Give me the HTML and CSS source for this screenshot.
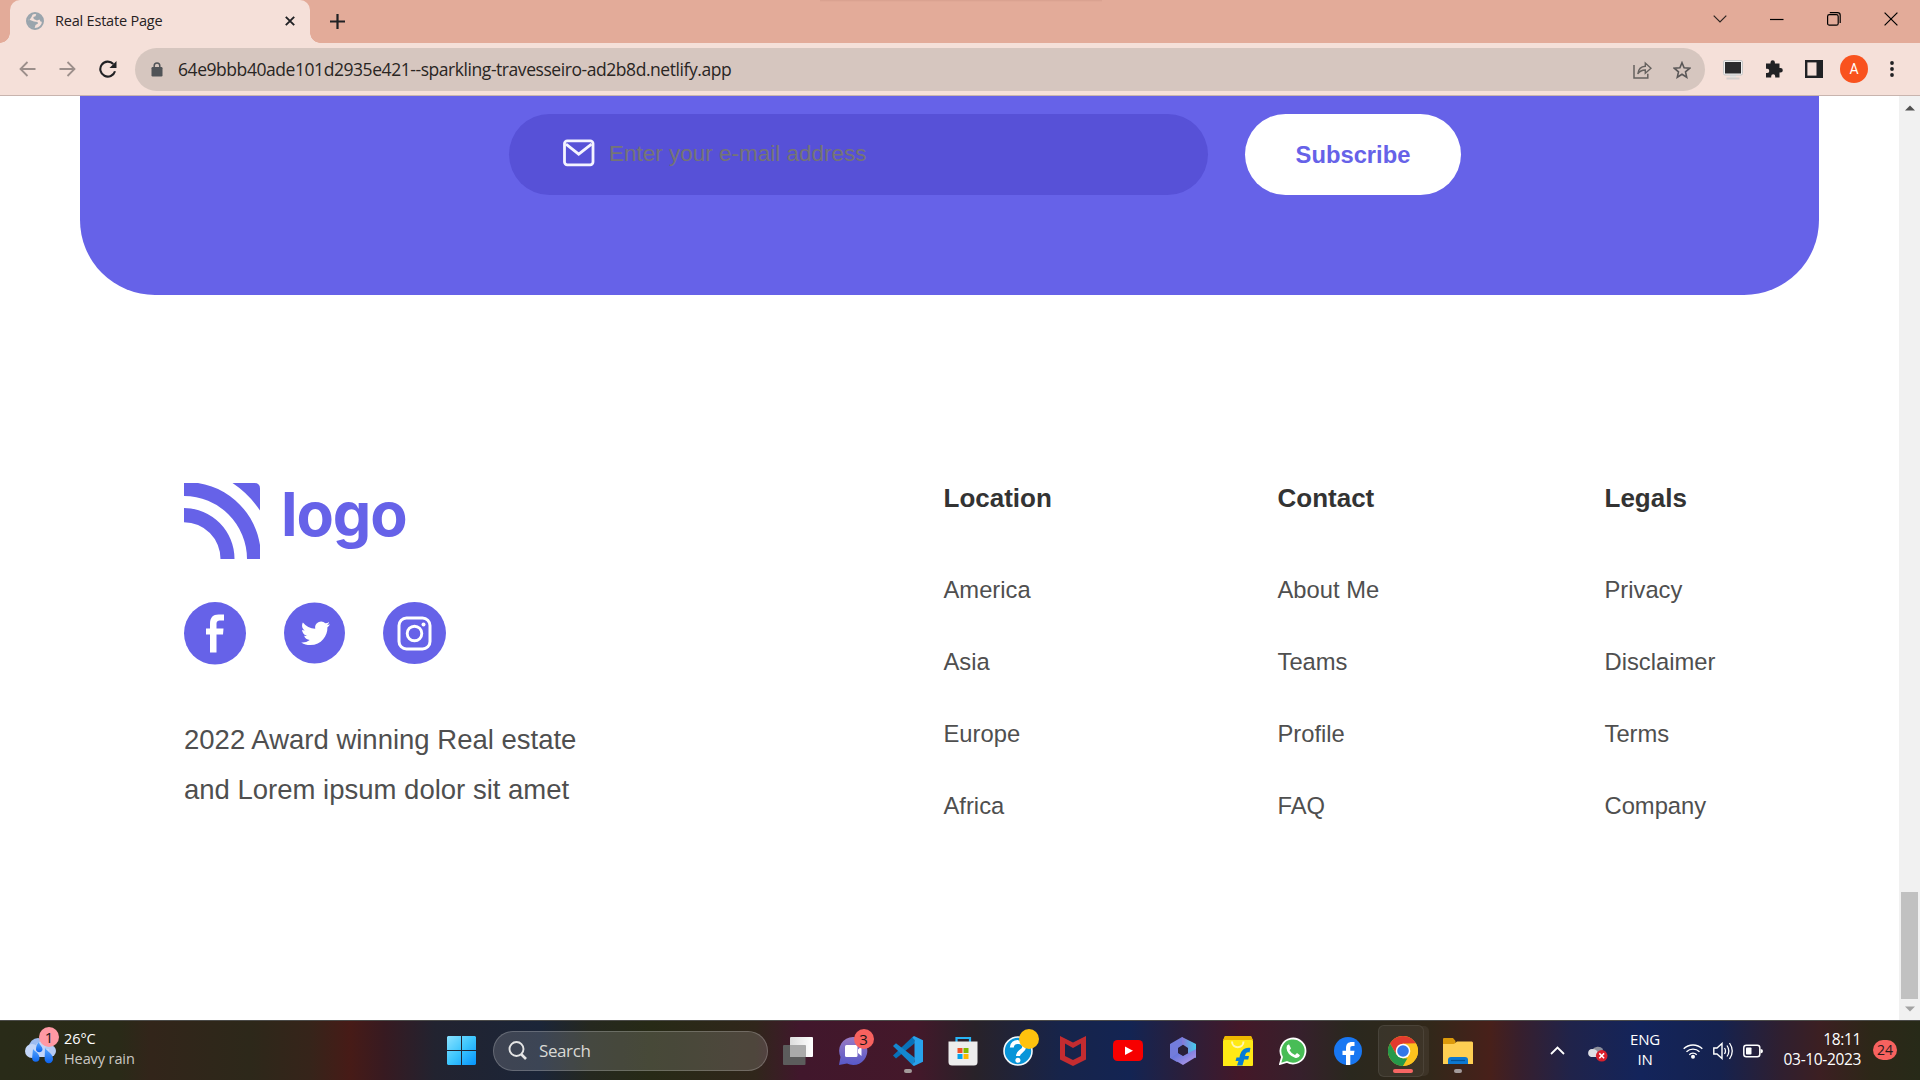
FILE: index.html
```html
<!DOCTYPE html>
<html lang="en">
<head>
<meta charset="utf-8">
<title>Real Estate Page</title>
<link rel="stylesheet" href="styles.css">
</head>
<body>
<div class="screen">
  <header class="tabstrip">
    <div class="tab">
      <svg class="globe" width="18" height="18" viewBox="0 0 18 18"><circle cx="9" cy="9" r="8" fill="#f5e0d9" stroke="#9aa5ad" stroke-width="2"/><path d="M10.500 1.500L9.500 4.200 7.300 5 7.800 7 11 8.500 13.500 7.600 14.500 9.500 16.500 10 17 7 15 3.500ZM1.500 8.200L4 8 8 9.500 11.500 10 12 11.500 9.500 13 8.500 16.500 5 15.500 2 12ZM1.500 7.500 4 3 7 1.500 5.500 5 3.500 8Z" fill="#9aa5ad"/></svg>
      <span class="tab-title">Real Estate Page</span>
      <svg class="tab-close" width="10" height="10" viewBox="0 0 10 10"><path d="M.8.800 9.200 9.200M9.200.8.800 9.200" stroke="#202124" stroke-width="1.900"/></svg>
    </div>
    <svg class="newtab" width="15" height="15" viewBox="0 0 15 15"><path d="M7.500 0V15M0 7.500H15" stroke="#202124" stroke-width="2.200"/></svg>
    <div class="wincontrols">
      <svg width="14" height="8" viewBox="0 0 14 8"><path d="M.7.700 7 7 13.300.7" fill="none" stroke="#2c2421" stroke-width="1.200"/></svg>
      <svg width="14" height="14" viewBox="0 0 14 14"><path d="M0 7.500H13.500" stroke="#000" stroke-width="1.200"/></svg>
      <svg width="14" height="14" viewBox="0 0 14 14"><rect x=".6" y="2.600" width="10.600" height="10.600" rx="1.800" fill="none" stroke="#000" stroke-width="1.200"/><path d="M2.800.600H10.500Q13.200.600 13.200 3.300V11" fill="none" stroke="#000" stroke-width="1.200"/></svg>
      <svg width="14" height="14" viewBox="0 0 14 14"><path d="M.6.600 13.400 13.400M13.400.6.600 13.400" stroke="#000" stroke-width="1.200"/></svg>
    </div>
  </header>
  <div class="toolbar">
    <div class="nav">
      <svg width="17" height="16" viewBox="0 0 17 16"><path d="M16.500 8H1.500M8.500 1 1.500 8 8.500 15" fill="none" stroke="#9c8f8b" stroke-width="1.800"/></svg>
      <svg width="17" height="16" viewBox="0 0 17 16"><path d="M.5 8H15.500M8.500 1 15.500 8 8.500 15" fill="none" stroke="#9c8f8b" stroke-width="1.800"/></svg>
      <svg width="18" height="18" viewBox="0 0 18 18"><path d="M14.300 4A7.500 7.500 0 1 0 16 11.200" fill="none" stroke="#202124" stroke-width="2.100"/><path d="M17.500 1V8H10.500Z" fill="#202124"/></svg>
    </div>
    <div class="omnibox">
      <svg width="12" height="15" viewBox="0 0 12 15"><rect x=".5" y="5" width="11" height="9.500" rx="1.200" fill="#505357"/><path d="M3.200 6V3.700a2.800 2.800 0 0 1 5.600 0V6" fill="none" stroke="#505357" stroke-width="1.500"/></svg>
      <span class="url">64e9bbb40ade101d2935e421--sparkling-travesseiro-ad2b8d.netlify.app</span>
      <svg class="share" width="19" height="18" viewBox="0 0 19 18"><path d="M1 4V17H14.800V12.800" fill="none" stroke="#66625f" stroke-width="1.500"/><path d="M4.800 13C5.300 8.600 8 5.600 12.300 5.300V2L18 7.300 12.300 12.300V9C9 9 6.500 10.300 4.800 13Z" fill="none" stroke="#66625f" stroke-width="1.400"/></svg>
      <svg width="18" height="18" viewBox="0 0 18 18"><path d="M9 1.700 11.100 6.700 16.700 7.200 12.500 10.800 13.700 16.200 9 13.300 4.300 16.200 5.500 10.800 1.300 7.200 6.900 6.700Z" fill="none" stroke="#5a5757" stroke-width="1.600"/></svg>
    </div>
    <div class="extensions">
      <svg width="20" height="20" viewBox="0 0 20 20"><path d="M7 15h6v2.500H7z" fill="#e2e2e2"/><path d="M3.500 17.500h13v2h-13z" fill="#d2cfcd"/><rect x=".5" y=".5" width="19" height="14.500" rx="1.500" fill="#f0f0f0" stroke="#c6c6c6"/><rect x="2" y="2" width="16" height="11.500" fill="#2b2b2d"/></svg>
      <svg width="18" height="18" viewBox="0 0 18 18"><path d="M1 3.500H5.500V2.500a2.200 2.200 0 0 1 4.400 0V3.500H14.500V8H15.500a2.300 2.300 0 0 1 0 4.600H14.500V17.500H10.200V16.200a2 2 0 0 0-4 0V17.500H1V13H2.200a2.100 2.100 0 0 0 0-4.200H1Z" fill="#202124"/></svg>
      <svg width="18" height="18" viewBox="0 0 18 18"><rect x="1.200" y="1.200" width="15.600" height="15.600" fill="none" stroke="#202124" stroke-width="2.400"/><path d="M11.500 1H17V17H11.500Z" fill="#202124"/></svg>
      <span class="avatar">A</span>
      <svg class="kebab" width="4" height="16" viewBox="0 0 4 16"><circle cx="2" cy="2" r="1.900" fill="#202124"/><circle cx="2" cy="8" r="1.900" fill="#202124"/><circle cx="2" cy="14" r="1.900" fill="#202124"/></svg>
    </div>
  </div>

  <div class="viewport">
    <main class="page">
      <section class="newsletter">
        <div class="email">
          <svg width="32" height="28" viewBox="0 0 32 28"><rect x="1.500" y="1.800" width="28.500" height="24" rx="2.800" fill="none" stroke="#f4f3ff" stroke-width="2.800"/><path d="M3 5.200 15.700 15.200 28.500 5.200" fill="none" stroke="#f4f3ff" stroke-width="2.800"/></svg>
          <span>Enter your e-mail address</span>
        </div>
        <div class="subscribe">Subscribe</div>
      </section>
      <footer class="footer">
        <div class="brand">
          <div class="logo">
            <svg width="76" height="76" viewBox="0 0 76 76" fill="#6662e8"><path d="M0 25A51 51 0 0 1 50.500 76H36.500A36.500 36.500 0 0 0 0 39.300Z"/><path d="M0 0H14C46 5 71 30 76 62V76H63A63 63 0 0 0 0 13Z"/><path d="M48.500 0H70.500Q76 0 76 5.500V27.500Q65 11 48.500 0Z"/></svg>
            <span class="wordmark">logo</span>
          </div>
          <div class="social">
            <svg width="62" height="63" viewBox="0 0 62 63"><ellipse cx="31" cy="31.300" rx="31" ry="31.300" fill="#6662e8"/><path d="M26 50.500V32.500H22V26.500H26V22C26 15.500 29 12.500 34.500 12.500H40V18.500H36.500C33.300 18.500 32.500 19.500 32.500 22.500V26.500H39.500L39 32.500H32.500V50.500Z" fill="#fff"/></svg>
            <svg width="61" height="62" viewBox="0 0 61 62"><circle cx="30.500" cy="31" r="30.500" fill="#6662e8"/><path transform="translate(17.200 18.200) scale(1.220)" d="M23.600 3.300c-.9.400-1.800.6-2.800.8 1-.6 1.800-1.500 2.100-2.700-.9.600-2 1-3.100 1.200A4.900 4.900 0 0 0 11.500 7C7.400 6.800 3.800 4.900 1.400 1.900.1 4.100.7 7 2.900 8.400c-.8 0-1.600-.2-2.200-.6 0 2.300 1.600 4.400 3.900 4.900-.7.200-1.500.2-2.200.1.600 2 2.400 3.400 4.600 3.400C4.900 17.800 2.400 18.500 0 18.200c2.200 1.400 4.700 2.200 7.500 2.200 9.100 0 14.300-7.700 14-14.600.8-.7 1.600-1.500 2.100-2.500z" fill="#fff"/></svg>
            <svg width="63" height="62" viewBox="0 0 63 62"><ellipse cx="31.500" cy="31" rx="31.500" ry="31" fill="#6662e8"/><rect x="16" y="16" width="31" height="31" rx="7.500" fill="none" stroke="#fff" stroke-width="3"/><circle cx="31.500" cy="31.500" r="7.300" fill="none" stroke="#fff" stroke-width="2.900"/><circle cx="40.500" cy="22.500" r="2" fill="#fff"/></svg>
          </div>
          <p class="blurb">2022 Award winning Real estate<br>and Lorem ipsum dolor sit amet</p>
        </div>
        <div class="links"><h4>Location</h4><a>America</a><a>Asia</a><a>Europe</a><a>Africa</a></div>
        <div class="links"><h4>Contact</h4><a>About Me</a><a>Teams</a><a>Profile</a><a>FAQ</a></div>
        <div class="links"><h4>Legals</h4><a>Privacy</a><a>Disclaimer</a><a>Terms</a><a>Company</a></div>
      </footer>
    </main>
    <aside class="scrollbar">
      <svg width="10" height="6" viewBox="0 0 10 6"><path d="M0 5.500 5 .5 10 5.500Z" fill="#505050"/></svg>
      <div class="thumb"></div>
      <svg width="10" height="6" viewBox="0 0 10 6"><path d="M0 .5 5 5.500 10 .5Z" fill="#a3a3a3"/></svg>
    </aside>
  </div>

  <div class="taskbar">
    <div class="weather">
      <div class="weather-icon">
        <svg width="34" height="32" viewBox="0 0 34 32"><defs><linearGradient id="rain" x2="0" y2="1"><stop offset="0" stop-color="#58a7ff"/><stop offset="1" stop-color="#0a62ee"/></linearGradient></defs><circle cx="13" cy="12" r="9" fill="#9dbcf0"/><circle cx="7" cy="16" r="7" fill="#c3d6f8"/><circle cx="18" cy="14" r="8" fill="#c3d6f8"/><circle cx="25" cy="16" r="6" fill="#b5cbf5"/><path d="M7 14h17v8H7z" fill="#c3d6f8"/><path d="M14 7c0 3 3.500 4 3.500 7.500a3.300 3.300 0 0 1-6.500 0C11 11 12 9 14 7Z" fill="url(#rain)"/><path d="M8 14C10 17 14.500 18 14.500 23a3.700 3.700 0 0 1-7.400 0ZM20 13c2 3 8 6 8 11a4.200 4.200 0 0 1-8.400 0Z" fill="url(#rain)"/></svg>
        <span class="badge pink">1</span>
      </div>
      <div class="weather-text"><b>26°C</b><span>Heavy rain</span></div>
    </div>
    <svg class="start" width="29" height="29" viewBox="0 0 29 29"><defs><linearGradient id="win" x2="1" y2="1"><stop offset="0" stop-color="#8be2ff"/><stop offset=".5" stop-color="#3cc5fd"/><stop offset="1" stop-color="#0593fb"/></linearGradient></defs><path d="M1 0H14V14H0V1ZM15 0H28L29 1V14H15ZM0 15H14V29H1L0 28ZM15 15H29V28L28 29H15Z" fill="url(#win)"/></svg>
    <div class="search">
      <svg width="20" height="20" viewBox="0 0 20 20"><circle cx="8.500" cy="8" r="7" fill="none" stroke="#e5e5e5" stroke-width="1.900"/><path d="M13 13 18 18" stroke="#e5e5e5" stroke-width="2.600"/></svg>
      <span>Search</span>
    </div>
    <div class="apps">
      <div class="app"><svg width="30" height="30" viewBox="0 0 30 30"><defs><linearGradient id="tv"><stop offset="0" stop-color="#ddd"/><stop offset="1" stop-color="#fff"/></linearGradient></defs><rect x="7" y="1" width="23" height="20" rx="1" fill="url(#tv)"/><rect x="0" y="9" width="22.500" height="20" rx="1" fill="#5c5c5c"/><path d="M7 9H22.500V21H7Z" fill="#aaa"/></svg></div>
      <div class="app"><svg width="30" height="30" viewBox="0 0 30 30"><defs><linearGradient id="chat" x2="0" y2="1"><stop offset="0" stop-color="#9a7bc4"/><stop offset="1" stop-color="#5758c8"/></linearGradient></defs><path d="M15 1a14 14 0 1 1-6 26.500L1 29 2.500 21A14 14 0 0 1 15 1Z" fill="url(#chat)"/><rect x="7" y="9" width="12.500" height="12" rx="1.500" fill="#fff"/><path d="M20 13.500 23.500 10.500V20L20 17Z" fill="#fff"/></svg><span class="badge red app-badge">3</span></div>
      <div class="app"><svg width="30" height="30" viewBox="0 0 30 30"><path d="M0 19.500 3 22.500 22 7 20.500 0Z" fill="#0871b9"/><path d="M0 10 3 7.200 22 22 20.500 30Z" fill="#1487cf"/><path d="M21 0 30 4.200V25.800L21 30 19.500 28.500 21.500 26V4L19.500 1.500Z" fill="#28a2ec"/></svg><i class="dot"></i></div>
      <div class="app"><svg width="30" height="30" viewBox="0 0 30 30"><path d="M8.500 7V2H22V7" fill="none" stroke="#28b4f5" stroke-width="2.200"/><path d="M.5 5.500H29.500V26Q29.500 29.500 26 29.500H4Q.5 29.500.5 26Z" fill="#ededed"/><path d="M9.500 12H14.500V17H9.500Z" fill="#ef5128"/><path d="M15.500 12H20.500V17H15.500Z" fill="#80b900"/><path d="M9.500 18H14.500V23H9.500Z" fill="#03a3ec"/><path d="M15.500 18H20.500V23H15.500Z" fill="#fdb802"/></svg></div>
      <div class="app"><svg width="30" height="30" viewBox="0 0 30 30"><circle cx="15" cy="15" r="14" fill="#0795d9" stroke="#f4f8fb" stroke-width="1.600"/><path d="M8.800 11.500C9 7.600 11.500 5.800 15.200 6 19 6 21.300 8 21.200 11 21 15 15.200 15.400 15 20" fill="none" stroke="#fff" stroke-width="4"/><circle cx="14.900" cy="24.300" r="2.500" fill="#fff"/></svg><span class="badge gold app-badge"></span></div>
      <div class="app"><svg width="30" height="30" viewBox="0 0 30 30"><path d="M2 0 15 6.500 28 0V23.500L15 30 2 23.500ZM7 7.500V20L15 24 23 20V7.500L15 12Z" fill="#c42c30" fill-rule="evenodd"/></svg></div>
      <div class="app"><svg width="30" height="30" viewBox="0 0 30 30"><rect y="4" width="30" height="21" rx="4.500" fill="#f70000"/><path d="M12 10.500 20 14.700 12 19Z" fill="#fff"/></svg></div>
      <div class="app"><svg width="30" height="30" viewBox="0 0 30 30"><defs><linearGradient id="m1" x2="1"><stop offset="0" stop-color="#8876d8"/><stop offset="1" stop-color="#44ccec"/></linearGradient><linearGradient id="m2" x2="1" y2="1"><stop offset="0" stop-color="#4769d9"/><stop offset="1" stop-color="#be9ce7"/></linearGradient></defs><path d="M14 1 2 8V22L9 26 14 22 10 18V12L19 6Z" fill="#737cdc"/><path d="M14 1 28 8V22L20 17V12L14 8Z" fill="url(#m1)"/><path d="M3 22 10 17 15 20 28 13V21L15 29Z" fill="url(#m2)"/><path d="M10.500 12 15 9.500 19.500 12.500V16.500L15 19.500 10.500 17Z" fill="#292038"/></svg></div>
      <div class="app"><svg width="30" height="30" viewBox="0 0 30 30"><path d="M2 0H28L30 5V29Q30 30 29 30H0V5Z" fill="#ffe915"/><path d="M2 0H28L30 4H0Z" fill="#efb800"/><path d="M9 5.500C9 13 20.500 13 20.500 5.500" fill="none" stroke="#fff6b0" stroke-width="2"/><path d="M14 29.500 15.500 25H12.500L13.500 21.500H16.500C17.500 15 21 11 27.500 12L26.500 16.500C23.500 15.800 22.500 17.500 22 20H26L25.200 23.500H21.200L19.500 29.500Z" fill="#047bd5"/></svg></div>
      <div class="app"><svg width="28" height="28" viewBox="0 0 28 28"><path d="M1 27 3 20A12.500 12.500 0 1 1 8 25Z" fill="#48bd56" stroke="#fff" stroke-width="1.800"/><path d="M8 8.500 10 7.200 12 11.500 10.500 13.200Q12.500 16.800 16 18L18 16 21 18.300Q20 21.500 16.500 21 8 18 7.500 11Z" fill="#fff"/></svg></div>
      <div class="app"><svg width="28" height="28" viewBox="0 0 28 28"><circle cx="14" cy="14" r="14" fill="#1877f2"/><path d="M12 28V18H8.500V13.800H12V11C12 7 14 5 18 5H20.500V9H18.500C16.800 9 16.300 9.800 16.300 11.300V13.800H20.500L19.800 18H16.300V28Z" fill="#fff"/></svg></div>
      <div class="app active"><svg width="30" height="30" viewBox="0 0 30 30"><circle cx="15" cy="15" r="15" fill="#fcc31e"/><path d="M15 0A15 15 0 0 1 28 7.500H15L8.500 18.800 2 7.500A15 15 0 0 1 15 0Z" fill="#e23b2e"/><path d="M2 7.500 8.500 18.700 15 22.500H21L15 30A15 15 0 0 1 2 7.500Z" fill="#26994a"/><path d="M15 30 21.500 18.800 22 15 20 8 28 7.500A15 15 0 0 1 15 30Z" fill="#fcc31e"/><circle cx="15" cy="15" r="7.300" fill="#fff"/><circle cx="15" cy="15" r="5.800" fill="#3277e8"/></svg><i class="dot running"></i></div>
      <div class="app"><svg width="30" height="30" viewBox="0 0 30 30"><path d="M0 3Q0 2 1 2H10L12.500 5V8H0Z" fill="#dc9a0b"/><path d="M0 8H11L14 5.500H29L30 6.500V28H0Z" fill="#fecf53"/><path d="M5 28V24Q5 21 8 21H22Q25 21 25 24V28Z" fill="#0d78d0"/><path d="M8 24.500H22" stroke="#045296" stroke-width="1.200"/></svg><i class="dot"></i></div>
    </div>
    <div class="tray">
      <svg class="chev" width="15" height="9" viewBox="0 0 15 9"><path d="M1 8 7.500 1.500 14 8" fill="none" stroke="#fff" stroke-width="1.800"/></svg>
      <svg class="cloud" width="21" height="18" viewBox="0 0 21 18"><path d="M5 6A7 7 0 0 1 16 5L14 10 6 11Z" fill="#8d8f9b"/><path d="M5 5Q10 5 11 9L15 13H4A4.100 4.100 0 0 1 5 5Z" fill="#dedfe4"/><circle cx="14.700" cy="11.800" r="5.800" fill="#d9202c"/><path d="M12.300 9.400 17.100 14.200M17.100 9.400 12.300 14.200" stroke="#fff" stroke-width="1.500"/></svg>
      <div class="lang"><span>ENG</span><span>IN</span></div>
      <svg width="20" height="16" viewBox="0 0 20 16"><path d="M.7 5.800A13.200 13.200 0 0 1 19.300 5.800M3.500 8.800A9.200 9.200 0 0 1 16.500 8.800M6.300 11.700A5.200 5.200 0 0 1 13.700 11.700" fill="none" stroke="#fff" stroke-width="1.400"/><circle cx="10" cy="13.800" r="2" fill="#fff"/></svg>
      <svg width="20" height="18" viewBox="0 0 20 18"><path d="M.8 6H4L9 1.500V16.500L4 12H.8Z" fill="none" stroke="#fff" stroke-width="1.400"/><path d="M11.500 6Q13.500 9 11.500 12M14 3.500Q17.700 9 14 14.500M16.500 1Q22 9 16.500 17" fill="none" stroke="#fff" stroke-width="1.300"/></svg>
      <svg width="20" height="14" viewBox="0 0 20 14"><rect x=".8" y="1.300" width="16" height="11.500" rx="2.500" fill="none" stroke="#fff" stroke-width="1.500"/><rect x="3" y="3.500" width="5.500" height="7" rx=".8" fill="#fff"/><path d="M17.500 5Q20 5 20 7T17.500 9.500Z" fill="#fff"/></svg>
      <div class="clock"><span>18:11</span><span>03-10-2023</span></div>
      <span class="notif">24</span>
    </div>
  </div>
</div>
</body>
</html>
```
FILE: styles.css
```css
* { box-sizing: border-box; }
body { margin: 0; background: #fff; }
svg { display: block; flex: none; }
.screen {
  width: 1920px; height: 1080px; overflow: hidden;
  display: flex; flex-direction: column;
  font-family: "Open Sans", "Noto Sans", sans-serif;
}

/* Browser tab strip */
.tabstrip {
  height: 43px; flex: none; display: flex; align-items: flex-start; padding-left: 10px;
  background: linear-gradient(#d79f8e, #e3ab99) 820px 0 / 282px 2px no-repeat #e3ab99;
}
.tab {
  position: relative; width: 300px; height: 43px; background: #f5e0d9;
  border-radius: 10px 10px 0 0; display: flex; align-items: center; padding: 0 15px 1px 16px;
}
.tab::before, .tab::after {
  content: ""; position: absolute; bottom: 0; width: 10px; height: 10px;
}
.tab::before { left: -10px; background: radial-gradient(circle at 0 0, transparent 9.5px, #f5e0d9 10px); }
.tab::after { right: -10px; background: radial-gradient(circle at 100% 0, transparent 9.5px, #f5e0d9 10px); }
.tab-title { margin-left: 11px; padding-bottom: 2px; font-size: 14.500px; letter-spacing: -0.2px; color: #26211f; white-space: nowrap; }
.tab-close { margin-left: auto; }
.newtab { margin: 14px 0 0 20px; }
.wincontrols { margin: 11px 22px 0 auto; display: flex; align-items: center; height: 15px; gap: 43px; }

/* Address bar */
.toolbar { height: 53px; flex: none; background: #f5e0d9; border-bottom: 1px solid #c8b4ae; display: flex; align-items: flex-start; }
.nav { width: 135px; height: 52px; display: flex; align-items: center; gap: 23px; padding-left: 19px; }
.omnibox { margin-top: 5px; width: 1570px; height: 43px; border-radius: 22px; background: #d6c6bf; display: flex; align-items: center; padding: 0 14px 0 16px; }
.url { margin-left: 15px; padding-bottom: 1px; font-size: 17.500px; letter-spacing: -0.44px; color: #292523; white-space: nowrap; }
.share { margin-left: auto; margin-right: 21px; }
.extensions { flex: 1; height: 52px; display: flex; align-items: center; gap: 22px; padding: 0 26px 0 18px; }
.extensions > :first-child { margin-top: 2px; }
.avatar { margin-left: -5px; width: 28px; height: 28px; border-radius: 50%; background: #f9521e; color: #fff; font: 14px/28px Roboto, sans-serif; text-align: center; }
.kebab { margin-left: auto; }

/* Page */
.viewport { height: 924px; flex: none; display: flex; font-family: "Liberation Sans", Arial, sans-serif; }
.page { width: 1899px; padding-left: 80px; }
.newsletter {
  width: 1739px; height: 199px; background: #6662e8; border-radius: 0 0 75px 75px;
  display: flex; align-items: flex-start; gap: 37px; padding: 18px 0 0 429px;
}
.email { width: 699px; height: 81px; border-radius: 41px; background: #5751d7; display: flex; align-items: center; gap: 14px; padding: 0 0 3px 54px; }
.email span { font-size: 22.500px; line-height: 28px; color: #757575; padding-top: 1px; }
.subscribe { width: 216px; height: 81px; border-radius: 41px; background: #fff; color: #6662e8; font-weight: 700; font-size: 23.750px; line-height: 81px; text-align: center; }

.footer { margin: 188px 0 0 104px; display: grid; grid-template-columns: 759.500px 334px 327px auto; }
.logo { display: flex; height: 76px; }
.wordmark { margin-left: 21px; font: 700 61px/76px Inter, sans-serif; letter-spacing: -1.100px; color: #6662e8; margin-top: -7px; }
.social { margin-top: 43px; display: flex; gap: 38px; height: 63px; }
.blurb { margin: 50px 0 0; font-size: 27.500px; line-height: 50px; color: #4f4f4f; white-space: nowrap; }
.links { display: flex; flex-direction: column; gap: 45px; }
.links h4 { margin: 0 0 17.500px; font-size: 26px; line-height: 30px; color: #333; }
.links a { font-size: 23.750px; line-height: 27px; color: #4f4f4f; }

.scrollbar { width: 21px; background: #f1f1f1; display: flex; flex-direction: column; align-items: center; padding: 9px 0 8px; }
.thumb { width: 17px; height: 107px; background: #c1c1c1; margin: auto 0 7px; }

/* Taskbar */
.taskbar {
  height: 60px; flex: none; display: flex; align-items: center; border-top: 1px solid #4b4b49; color: #fff;
  background: linear-gradient(90deg, #292b18 0, #2a2a18 120px, #32251a 150px, #2d281a 250px, #36241a 310px, #471b17 350px, #371a21 385px, #222330 435px, #1b2538 540px, #25281f 590px, #272a16 650px, #30261b 755px, #41172c 800px, #44182a 915px, #282229 975px, #17244a 1060px, #132453 1130px, #291f3c 1180px, #441828 1240px, #36202c 1300px, #2a281e 1350px, #32281a 1430px, #48201a 1490px, #371f2d 1520px, #20234a 1570px, #13245b 1640px, #15224f 1720px, #2f1f30 1780px, #3c1f22 1820px, #2d2718 1870px, #272a18 1920px);
}
.weather { width: 447px; display: flex; padding-left: 25px; }
.weather-icon { position: relative; width: 39px; padding-top: 5px; }
.weather-icon .badge { left: 14px; top: -3px; }
.badge { position: absolute; width: 20px; height: 20px; border-radius: 50%; color: #1a1516; font-size: 15px; line-height: 20px; text-align: center; }
.pink { background: #ff99a4; }
.red { background: #f7625f; }
.gold { background: #ffc20e; }
.weather-text { display: flex; flex-direction: column; font-size: 14.500px; line-height: 20px; letter-spacing: -0.1px; padding-bottom: 2px; margin-top: -1px; }
.weather-text b { font-weight: 400; }
.weather-text span { color: #cbc8c4; }
.search { margin-left: 17px; width: 275px; height: 40px; border-radius: 20px; border: 1px solid rgba(255,255,255,.2); background: rgba(255,255,255,.15); display: flex; align-items: center; gap: 11px; padding-left: 14px; font-size: 17px; letter-spacing: -0.4px; color: #d9d9d5; }
.apps { display: flex; margin-left: 2px; height: 59px; }
.app { position: relative; width: 55px; display: flex; align-items: center; justify-content: center; }
.app > svg { position: relative; }
.app .app-badge { left: 28.500px; top: 8px; }
.dot { position: absolute; left: 23.500px; bottom: 7px; width: 8px; height: 4px; border-radius: 2px; background: #a39a9a; }
.running { left: 17.500px; width: 20px; background: #f76663; }
.active::before { content: ""; position: absolute; left: 3px; top: 4px; width: 44px; height: 50px; border-radius: 6px; border: 1px solid rgba(255,255,255,.08); background: rgba(255,255,255,.06); box-shadow: 6px 0 0 -1px rgba(255,255,255,.06); }
.tray { margin-left: auto; padding-right: 23px; display: flex; align-items: center; gap: 10px; font-size: 15px; line-height: 20px; }
.chev { margin-right: 12px; }
.cloud { margin-right: 13px; margin-top: 5px; }
.lang { display: flex; flex-direction: column; align-items: center; width: 32px; margin: -3px 12px 0 -2px; letter-spacing: -0.2px; }
.clock { width: 87px; display: flex; flex-direction: column; align-items: flex-end; font-size: 15.500px; letter-spacing: -0.35px; margin: -3px 0 0 1px; white-space: nowrap; }
.notif { width: 24px; height: 20px; border-radius: 10px; background: #f7625f; color: #24191a; font-size: 14px; line-height: 20px; text-align: center; margin: -2px 0 0 2px; }
```
